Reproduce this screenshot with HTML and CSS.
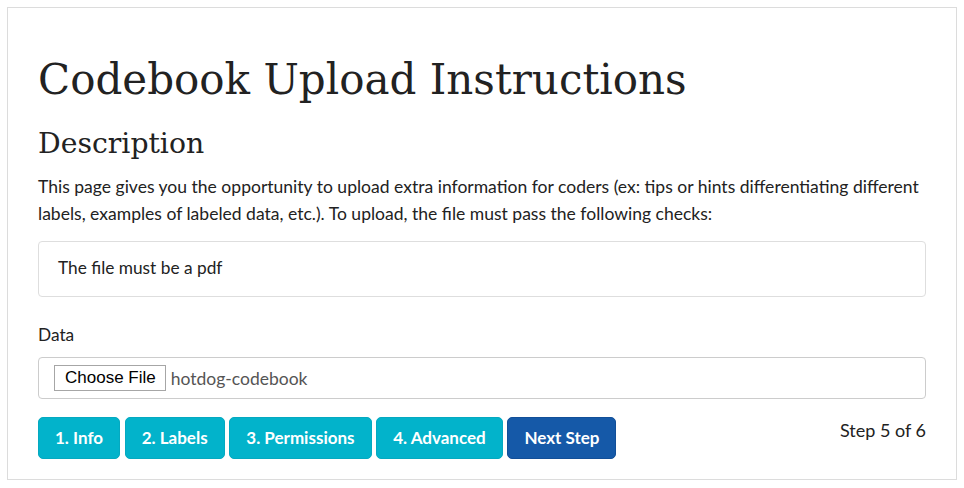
FILE: index.html
```html
<!DOCTYPE html>
<html lang="en">
<head>
<meta charset="utf-8">
<title>Codebook Upload Instructions</title>
<link rel="stylesheet" href="styles.css">
</head>
<body>
<div class="panel">
  <h1 class="title">Codebook Upload Instructions</h1>
  <h2 class="subtitle">Description</h2>
  <p class="desc">This page gives you the opportunity to upload extra information for coders (ex: tips or hints differentiating different labels, examples of labeled data, etc.). To upload, the file must pass the following checks:</p>
  <div class="well">The file must be a pdf</div>
  <div class="field-label">Data</div>
  <div class="file-field"><span class="file-btn">Choose File</span><span class="file-name">hotdog-codebook</span></div>
  <div class="actions">
    <div class="steps">
      <span class="btn btn-info">1. Info</span>
      <span class="btn btn-info">2. Labels</span>
      <span class="btn btn-info">3. Permissions</span>
      <span class="btn btn-info">4. Advanced</span>
      <span class="btn btn-primary">Next Step</span>
    </div>
    <span class="step-count">Step 5 of 6</span>
  </div>
</div>
</body>
</html>
```
FILE: styles.css
```css
html, body {
  margin: 0;
  padding: 0;
  background: #fff;
}
body {
  padding: 7px;
  font-family: Lato, "Open Sans", sans-serif;
  font-size: 17.3px;
  line-height: 27px;
  color: #222;
}
.panel {
  border: 1px solid #dcdcdc;
  height: 471px;
  padding: 0 30px;
}
.title {
  font-family: "DejaVu Serif", serif;
  font-weight: normal;
  font-size: 42px;
  line-height: 52px;
  margin: 46px 0 0;
  color: #222;
}
.subtitle {
  font-family: "DejaVu Serif", serif;
  font-weight: normal;
  font-size: 28.3px;
  line-height: 38px;
  margin: 19px 0 0;
  color: #222;
}
.desc {
  margin: 10px 0 0;
  font-size: 17.55px;
}
.well {
  margin-top: 14px;
  border: 1px solid #dedede;
  border-radius: 4px;
  padding: 12px 19px 15px;
}
.field-label {
  margin-top: 24px;
}
.file-field {
  margin-top: 9px;
  border: 1px solid #ccc;
  border-radius: 4px;
  height: 40px;
  display: flex;
  align-items: center;
  padding: 0 15px;
  gap: 5px;
}
.file-btn {
  font-family: "Liberation Sans", Arial, sans-serif;
  font-size: 17px;
  line-height: 24px;
  color: #000;
  border: 1px solid #a6a6a6;
  background: #fff;
  padding: 0 9px 0 10px;
}
.file-name {
  color: #555;
  font-size: 17.5px;
}
.actions {
  margin-top: 18px;
  display: flex;
  justify-content: space-between;
  align-items: flex-start;
}
.steps {
  display: flex;
  gap: 4.7px;
}
.btn {
  display: inline-block;
  font-weight: bold;
  font-size: 17px;
  line-height: 24px;
  padding: 8px 16px;
  border-radius: 5px;
  color: #fff;
  border: 1px solid transparent;
}
.btn-info {
  background: #02b3cb;
  border-color: #05a9c0;
}
.btn-primary {
  background: #1559a8;
  border-color: #124f98;
}
.step-count {
  margin-top: 0;
  font-size: 18px;
  color: #222;
}
```
